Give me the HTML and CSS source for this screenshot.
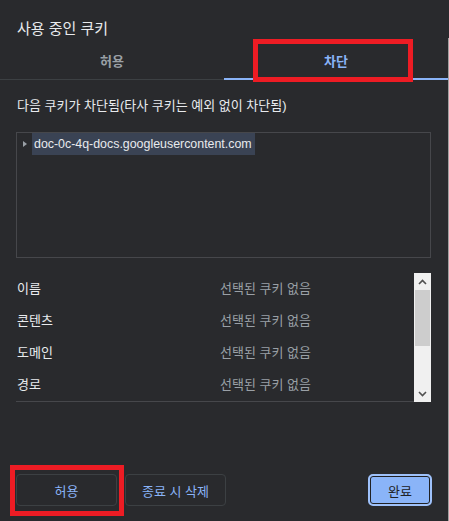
FILE: index.html
```html
<!DOCTYPE html>
<html lang="ko">
<head>
    <meta charset="UTF-8">
    <meta name="viewport" content="width=device-width, initial-scale=1.0">
    <title>사용 중인 쿠키</title>
    <link rel="stylesheet" href="styles.css">
</head>
<body>

    <div class="page">
        <div class="dialog">
            <h1 class="title">사용 중인 쿠키</h1>

            <div class="tabs">
                <div class="tab">허용</div>
                <div class="tab active">차단</div>
                <span class="mark mark-tab"></span>
            </div>

            <p class="note">다음 쿠키가 차단됨(타사 쿠키는 예외 없이 차단됨)</p>

            <div class="tree">
                <div class="tree-row">
                    <span class="caret"></span>
                    <span class="host">doc-0c-4q-docs.googleusercontent.com</span>
                </div>
            </div>

            <div class="details">
                <div class="detail-list">
                    <div class="row"><span class="label">이름</span><span class="value">선택된 쿠키 없음</span></div>
                    <div class="row"><span class="label">콘텐츠</span><span class="value">선택된 쿠키 없음</span></div>
                    <div class="row"><span class="label">도메인</span><span class="value">선택된 쿠키 없음</span></div>
                    <div class="row"><span class="label">경로</span><span class="value">선택된 쿠키 없음</span></div>
                </div>
                <div class="scrollbar">
                    <div class="sb-btn">
                        <svg width="9" height="6" viewBox="0 0 9 6"><path d="M1 5 L4.5 1.5 L8 5" fill="none" stroke="#505050" stroke-width="1.6"/></svg>
                    </div>
                    <div class="sb-thumb"></div>
                    <div class="sb-track"></div>
                    <div class="sb-btn">
                        <svg width="9" height="6" viewBox="0 0 9 6"><path d="M1 1 L4.5 4.5 L8 1" fill="none" stroke="#505050" stroke-width="1.6"/></svg>
                    </div>
                </div>
            </div>

            <div class="footer">
                <button class="btn">허용</button>
                <button class="btn">종료 시 삭제</button>
                <button class="btn primary">완료</button>
                <span class="mark mark-btn"></span>
            </div>
        </div>
        <div class="edge"></div>
    </div>

</body>
</html>
```

FILE: styles.css
```css
* { box-sizing: border-box; margin: 0; padding: 0; }
body {
    font-family: "Liberation Sans", "Noto Sans CJK KR", sans-serif;
    background: #292a2d;
    color: #e8eaed;
    font-size: 13px;
}

.page { display: flex; height: 521px; }
.dialog { width: 448px; }
.edge { width: 1px; margin-top: 38px; background: #a0a0a0; }

.title {
    font-size: 15px;
    font-weight: normal;
    line-height: 20px;
    padding: 19px 17px 6px;
}

.tabs { display: flex; position: relative; }
.tab {
    flex: 1;
    height: 35px;
    line-height: 34px;
    text-align: center;
    color: #9aa0a6;
    font-weight: bold;
    border-bottom: 1px solid #3c4043;
}
.tab.active {
    color: #8ab4f8;
    border-bottom: 2px solid #8ab4f8;
    line-height: 33px;
}

.mark {
    position: absolute;
    border: 5px solid #ed1c24;
}
.mark-tab { left: 253px; top: -6px; width: 160px; height: 43px; }
.mark-btn { left: 10px; top: -9px; width: 114px; height: 51px; }

.note {
    line-height: 18px;
    padding: 17px 17px 0;
}

.tree {
    margin: 17px 17px 0 16px;
    height: 126px;
    border: 1px solid #46474b;
}
.tree-row { display: flex; align-items: center; height: 22px; }
.caret {
    width: 0;
    height: 0;
    margin: 0 5px 0 6px;
    border-left: 4px solid #9aa0a6;
    border-top: 3.5px solid transparent;
    border-bottom: 3.5px solid transparent;
}
.host {
    background: #3a4354;
    height: 22px;
    line-height: 22px;
    padding: 0 3px 0 2px;
    font-size: 12.4px;
    color: #e8eaed;
}

.details {
    display: flex;
    margin: 15px 17px 0 16px;
    height: 129px;
}
.detail-list {
    flex: 1;
    border-bottom: 1px solid #46474b;
}
.row { display: flex; height: 32px; align-items: center; padding-bottom: 3px; }
.label { width: 204px; padding-left: 1px; color: #e8eaed; }
.value { color: #9aa0a6; }

.scrollbar {
    width: 17px;
    display: flex;
    flex-direction: column;
    background: #f0f0f0;
}
.sb-btn { height: 17px; display: flex; align-items: center; justify-content: center; }
.sb-thumb { height: 56px; margin: 0 1px; background: #cdcdcd; }
.sb-track { flex: 1; }

.footer {
    position: relative;
    display: flex;
    gap: 8px;
    margin-top: 72px;
    padding: 0 16px;
}
.btn {
    font-family: inherit;
    font-size: 13px;
    font-weight: normal;
    width: 101px;
    height: 32px;
    background: transparent;
    color: #8ab4f8;
    border: 1px solid #3c4043;
    border-radius: 4px;
}
.btn.primary {
    width: 64px;
    margin-left: auto;
    background: #8ab4f8;
    color: #202124;
    border: 2px solid #9ec1fa;
    box-shadow: inset 0 0 0 1px #202124;
    border-radius: 5px;
}
```
